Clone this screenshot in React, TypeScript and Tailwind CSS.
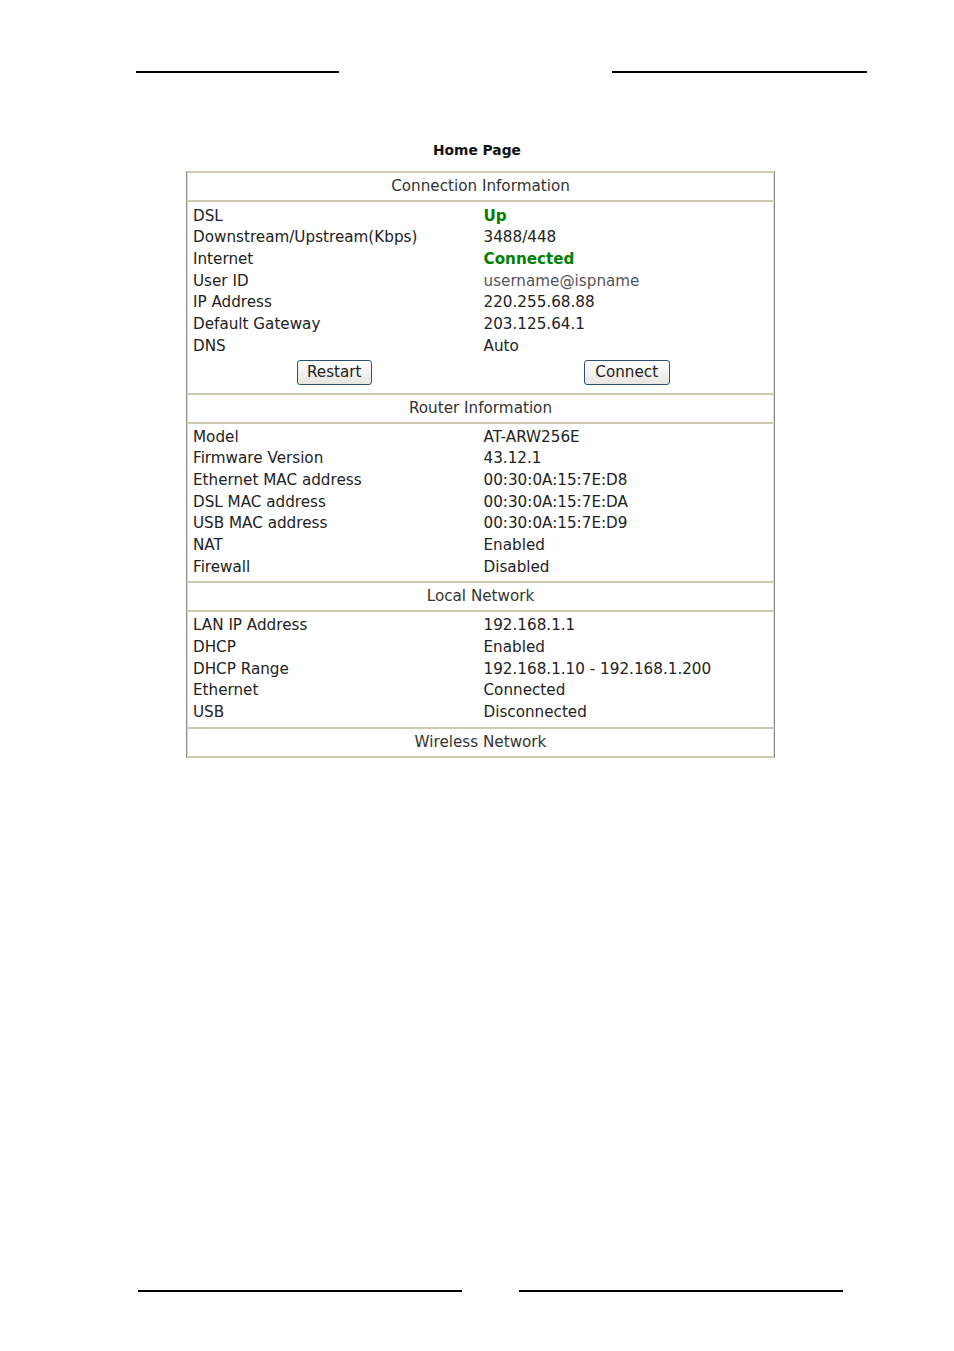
const rule = "h-[2px] bg-black";

type Row = { label: string; value: string; tone?: "green" | "muted" };

const connection: Row[] = [
  { label: "DSL", value: "Up", tone: "green" },
  { label: "Downstream/Upstream(Kbps)", value: "3488/448" },
  { label: "Internet", value: "Connected", tone: "green" },
  { label: "User ID", value: "username@ispname", tone: "muted" },
  { label: "IP Address", value: "220.255.68.88" },
  { label: "Default Gateway", value: "203.125.64.1" },
  { label: "DNS", value: "Auto" },
];

const router: Row[] = [
  { label: "Model", value: "AT-ARW256E" },
  { label: "Firmware Version", value: "43.12.1" },
  { label: "Ethernet MAC address", value: "00:30:0A:15:7E:D8" },
  { label: "DSL MAC address", value: "00:30:0A:15:7E:DA" },
  { label: "USB MAC address", value: "00:30:0A:15:7E:D9" },
  { label: "NAT", value: "Enabled" },
  { label: "Firewall", value: "Disabled" },
];

const local: Row[] = [
  { label: "LAN IP Address", value: "192.168.1.1" },
  { label: "DHCP", value: "Enabled" },
  { label: "DHCP Range", value: "192.168.1.10 - 192.168.1.200" },
  { label: "Ethernet", value: "Connected" },
  { label: "USB", value: "Disconnected" },
];

const SectionHeader = ({ title }: { title: string }) => (
  <div className="flex h-[31px] items-center justify-center border-y-2 border-[#cdc9b3] text-[#333]">
    {title}
  </div>
);

// first section sits a pixel lower than the others in the original
const Rows = ({ rows, first }: { rows: Row[]; first?: boolean }) => (
  <div className={first ? "py-[3px]" : "pb-[4px] pt-[2px]"}>
    {rows.map((r) => (
      <div key={r.label} className="grid h-[21.7px] grid-cols-2 items-center">
        <div className="pl-[5px] text-[#222]">{r.label}</div>
        <div
          className={
            r.tone === "green"
              ? "pl-[3px] font-bold text-[#008000]"
              : r.tone === "muted"
                ? "pl-[3px] text-[#555]"
                : "pl-[3px] text-[#222]"
          }
        >
          {r.value}
        </div>
      </div>
    ))}
  </div>
);

const XpButton = ({ label, w }: { label: string; w: string }) => (
  <button
    className={`${w} h-[25px] rounded-[3px] border border-[#2c4f7c] bg-gradient-to-b from-white to-[#e6e5de] text-[#222]`}
  >
    {label}
  </button>
);

export default function App() {
  return (
    <div className="flex h-[1351px] w-[954px] flex-col bg-white font-['DejaVu_Sans',sans-serif] text-[15.2px]">
      <div className="mt-[71px] flex">
        <div className={`ml-[136px] w-[203px] ${rule}`} />
        <div className={`ml-[273px] w-[255px] ${rule}`} />
      </div>

      <div className="mt-[67px] text-center text-[13.8px] font-bold text-[#111]">
        Home Page
      </div>

      <div className="ml-[186px] mt-[10px] w-[589px] border-x border-[#8f8f8f]">
        <div className="border-x border-[#dcd9c8]">
          <SectionHeader title="Connection Information" />
          <Rows rows={connection} first />
          <div className="grid grid-cols-2 pb-[8px]">
            <div className="flex justify-center">
              <XpButton label="Restart" w="w-[75px]" />
            </div>
            <div className="flex justify-center">
              <XpButton label="Connect" w="w-[86px]" />
            </div>
          </div>
          <SectionHeader title="Router Information" />
          <Rows rows={router} />
          <SectionHeader title="Local Network" />
          <Rows rows={local} />
          <SectionHeader title="Wireless Network" />
        </div>
      </div>

      <div className="mb-[59px] mt-auto flex">
        <div className={`ml-[138px] w-[324px] ${rule}`} />
        <div className={`ml-[57px] w-[324px] ${rule}`} />
      </div>
    </div>
  );
}
